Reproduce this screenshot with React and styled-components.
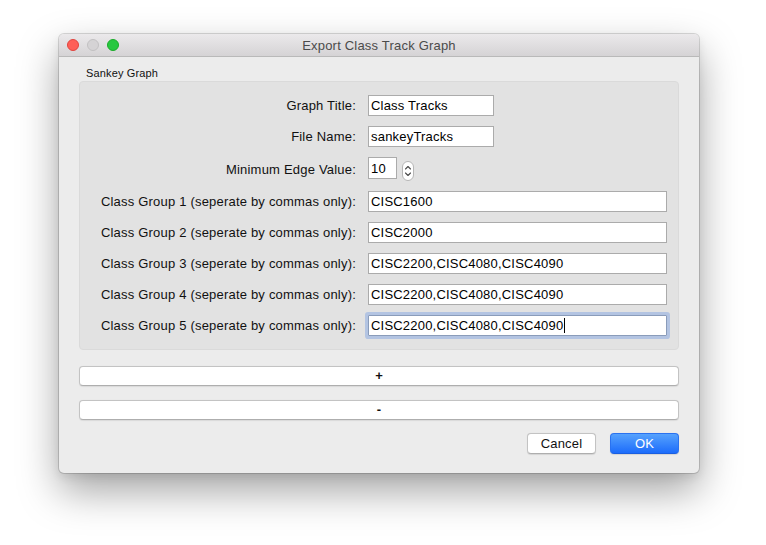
import React from "react";
import styled, { createGlobalStyle } from "styled-components";

const Global = createGlobalStyle`
  html, body { margin: 0; padding: 0; background: #ffffff; }
  body { font-family: "Liberation Sans", Arial, sans-serif; }
  * { box-sizing: border-box; }
`;

const Desktop = styled.div`
  width: 766px;
  height: 545px;
  padding: 34px 0 0 59px;
  overflow: hidden;
`;

const Window = styled.div`
  width: 640px;
  height: 439px;
  background: #ececec;
  border-radius: 5px;
  box-shadow: 0 0 0 1px rgba(0, 0, 0, 0.14), 0 18px 40px rgba(0, 0, 0, 0.36),
    0 4px 10px rgba(0, 0, 0, 0.08);
  display: flex;
  flex-direction: column;
  overflow: hidden;
`;

const TitleBar = styled.div`
  height: 23px;
  flex: none;
  display: flex;
  align-items: center;
  position: relative;
  background: linear-gradient(#ebe9eb, #d5d3d5);
  border-bottom: 1px solid #b9b9b9;
`;

const Lights = styled.div`
  display: flex;
  gap: 8px;
  padding-left: 8px;
`;

const Light = styled.span`
  width: 12px;
  height: 12px;
  border-radius: 50%;
  background: ${(p) => p.$c};
  border: 1px solid ${(p) => p.$b};
`;

const Title = styled.div`
  position: absolute;
  left: 0;
  right: 0;
  text-align: center;
  font-size: 13px;
  letter-spacing: 0.2px;
  color: #4b4b4b;
  padding-top: 1px;
`;

const Body = styled.div`
  flex: 1;
  display: flex;
  flex-direction: column;
  padding: 9px 20px 19px 20px;
`;

const GroupLabel = styled.div`
  font-size: 11px;
  letter-spacing: 0.15px;
  color: #111;
  padding-left: 7px;
  height: 15px;
  line-height: 15px;
`;

const Panel = styled.div`
  background: #e2e2e2;
  border: 1px solid #dadada;
  border-radius: 4px;
  padding: 13px 11px 13px 0;
  display: grid;
  grid-template-columns: 276px 1fr;
  column-gap: 12px;
  row-gap: 10px;
  align-items: center;
`;

const Label = styled.label`
  font-size: 13px;
  letter-spacing: 0.2px;
  color: #111;
  text-align: right;
  white-space: nowrap;
`;

const FieldCell = styled.div`
  display: flex;
  align-items: center;
  gap: 5px;
  height: ${(p) => p.$h || 21}px;
`;

const Field = styled.div`
  width: ${(p) => (p.$w ? p.$w + "px" : "100%")};
  height: ${(p) => p.$h || 21}px;
  align-self: ${(p) => (p.$top ? "flex-start" : "center")};
  background: #ffffff;
  border: 1px solid ${(p) => (p.$focus ? "#8a9cba" : "#ababab")};
  box-shadow: ${(p) => (p.$focus ? "0 0 0 3px #b3c4e2" : "none")};
  border-radius: ${(p) => (p.$focus ? "1px" : "0")};
  font-size: 13px;
  letter-spacing: 0.2px;
  color: #000;
  padding-left: 2px;
  display: flex;
  align-items: center;
  white-space: nowrap;
`;

const Caret = styled.span`
  display: inline-block;
  width: 1px;
  height: 15px;
  background: #000;
  margin-left: 1px;
`;

const Stepper = styled.div`
  width: 12px;
  height: 20px;
  border: 1px solid #b6b6b6;
  border-radius: 6px;
  background: #fff;
  display: flex;
  align-items: center;
  justify-content: center;
  margin-top: 3px;
`;

const Wide = styled.button`
  margin-top: ${(p) => p.$mt}px;
  height: 20px;
  width: 100%;
  background: #fff;
  border: 1px solid #c3c3c3;
  border-bottom-color: #aeaeae;
  border-radius: 4px;
  font-family: "Liberation Sans", Arial, sans-serif;
  font-size: 13px;
  font-weight: bold;
  color: #111;
  padding: 0;
  line-height: 18px;
  box-shadow: 0 0.5px 1px rgba(0, 0, 0, 0.08);
`;

const Footer = styled.div`
  margin-top: 13px;
  display: flex;
  justify-content: flex-end;
  gap: 14px;
`;

const DlgButton = styled.button`
  width: 69px;
  height: 21px;
  border-radius: 4px;
  font-family: "Liberation Sans", Arial, sans-serif;
  font-size: 13px;
  letter-spacing: 0.2px;
  padding: 0;
  border: 1px solid ${(p) => (p.$primary ? "#2a72f0" : "#c3c3c3")};
  border-bottom-color: ${(p) => (p.$primary ? "#1a5ee0" : "#aeaeae")};
  color: ${(p) => (p.$primary ? "#ffffff" : "#111")};
  background: ${(p) =>
    p.$primary ? "linear-gradient(#56a2fd, #1c6cfb)" : "#ffffff"};
  box-shadow: 0 0.5px 1px rgba(0, 0, 0, 0.1);
`;

const rows = [
  { label: "Graph Title:", value: "Class Tracks", w: 126 },
  { label: "File Name:", value: "sankeyTracks", w: 126 },
];

const groups = [
  "CISC1600",
  "CISC2000",
  "CISC2200,CISC4080,CISC4090",
  "CISC2200,CISC4080,CISC4090",
  "CISC2200,CISC4080,CISC4090",
];

export default function App() {
  return (
    <>
      <Global />
      <Desktop>
        <Window>
          <TitleBar>
            <Lights>
              <Light $c="#fe5f57" $b="#e0443e" />
              <Light $c="#d5d3d5" $b="#c2c0c2" />
              <Light $c="#28c840" $b="#1aab29" />
            </Lights>
            <Title>Export Class Track Graph</Title>
          </TitleBar>
          <Body>
            <GroupLabel>Sankey Graph</GroupLabel>
            <Panel>
              {rows.map((r) => (
                <React.Fragment key={r.label}>
                  <Label>{r.label}</Label>
                  <FieldCell>
                    <Field $w={r.w}>{r.value}</Field>
                  </FieldCell>
                </React.Fragment>
              ))}
              <Label>Minimum Edge Value:</Label>
              <FieldCell $h={24}>
                <Field $w={29} $h={22} $top>
                  10
                </Field>
                <Stepper>
                  <svg width="8" height="14" viewBox="0 0 8 14">
                    <path
                      d="M1.5 5 L4 2.5 L6.5 5 M1.5 9 L4 11.5 L6.5 9"
                      fill="none"
                      stroke="#4a4a4a"
                      strokeWidth="1.1"
                      strokeLinecap="round"
                      strokeLinejoin="round"
                    />
                  </svg>
                </Stepper>
              </FieldCell>
              {groups.map((g, i) => (
                <React.Fragment key={i}>
                  <Label>
                    Class Group {i + 1} (seperate by commas only):
                  </Label>
                  <FieldCell>
                    <Field $focus={i === 4}>
                      {g}
                      {i === 4 && <Caret />}
                    </Field>
                  </FieldCell>
                </React.Fragment>
              ))}
            </Panel>
            <Wide $mt={16}>+</Wide>
            <Wide $mt={14}>-</Wide>
            <Footer>
              <DlgButton>Cancel</DlgButton>
              <DlgButton $primary>OK</DlgButton>
            </Footer>
          </Body>
        </Window>
      </Desktop>
    </>
  );
}
